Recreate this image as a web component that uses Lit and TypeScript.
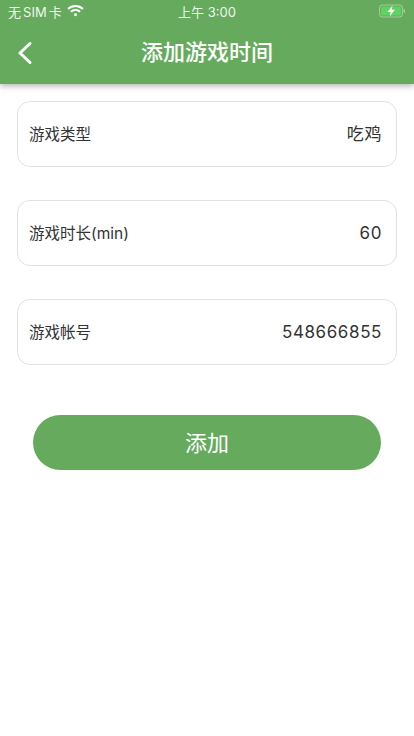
import { LitElement, html, css } from "lit";
import { customElement } from "lit/decorators.js";

const rows = [
  ["游戏类型", "吃鸡", false],
  ["游戏时长(min)", "60", true],
  ["游戏帐号", "548666855", true],
];

@customElement("app-root")
export class AppRoot extends LitElement {
  static styles = css`
    :host {
      display: block;
      width: 414px;
      height: 736px;
      background: #fff;
      overflow: hidden;
      font-family: "Inter", "Noto Sans CJK SC", sans-serif;
    }
    .head {
      background: #66ab5d;
      height: 84px;
      box-shadow: 0 2px 6px rgba(0, 0, 0, 0.3);
      color: #fff;
      display: flex;
      flex-direction: column;
      position: relative;
    }
    .status {
      height: 22px;
      display: grid;
      grid-template-columns: 1fr auto 1fr;
      align-items: center;
      padding: 0 8px;
      font-size: 13px;
      color: rgba(255,255,255,0.92);
    }
    .left { display: flex; align-items: center; gap: 5px; word-spacing: -1.6px; }
    .wifi { margin-top: -2px; }
    .right { display: flex; justify-content: flex-end; }
    .nav {
      flex: 1;
      display: flex;
      align-items: center;
      justify-content: center;
      position: relative;
    }
    .title { font-size: 22px; font-weight: 500; padding-bottom: 6px; }
    .back { position: absolute; left: 17px; top: 19px; }
    .form { display: flex; flex-direction: column; gap: 33px; padding: 17px 17px 0; }
    .row {
      height: 66px;
      box-sizing: border-box;
      border: 1px solid #e2e2e2;
      border-radius: 13px;
      display: flex;
      align-items: center;
      justify-content: space-between;
      padding: 0 14px 2px 11px;
    }
    .label { font-size: 15.5px; color: #333; }
    .value { font-size: 17px; color: #333; letter-spacing: 0.6px; padding-bottom: 2px; }
    .value.num { padding: 2px 0 0; }
    .btn {
      margin: 50px 33px 0;
      height: 55px;
      border-radius: 28px;
      background: #66ab5d;
      color: #fff;
      font-size: 22px;
      padding-bottom: 4px;
      box-sizing: border-box;
      display: flex;
      align-items: center;
      justify-content: center;
    }
  `;

  render() {
    return html`
      <div class="head">
        <div class="status">
          <div class="left">
            <span>无 SIM 卡</span>
            <svg class="wifi" width="17" height="13" viewBox="0 0 16 12" fill="none" stroke="#fff" stroke-width="2">
              <path d="M1 4.5C5 .8 11 .8 15 4.5" />
              <path d="M3.7 7.2c2.5-2.2 6.1-2.2 8.6 0" />
              <circle cx="8" cy="10" r="1.4" fill="#fff" stroke="none" />
            </svg>
          </div>
          <span>上午 3:00</span>
          <div class="right">
            <svg width="27" height="14" viewBox="0 0 27 14">
              <rect x="0.5" y="1" width="23" height="12" rx="3" fill="none" stroke="rgba(255,255,255,0.4)" />
              <rect x="2" y="2.5" width="20" height="9" rx="1.5" fill="#5fd35f" />
              <rect x="24.5" y="5" width="1.5" height="4" rx="0.7" fill="rgba(255,255,255,0.4)" />
              <path d="M13.5 1.5 8.5 8h3.2l-1 4.5 5.2-6.8h-3.2z" fill="#fff" />
            </svg>
          </div>
        </div>
        <div class="nav">
          <svg class="back" width="16" height="24" viewBox="0 0 16 24" fill="none" stroke="#fff" stroke-width="3" stroke-linecap="round" stroke-linejoin="round">
            <path d="M13 2.5 3 12l10 9.5" />
          </svg>
          <span class="title">添加游戏时间</span>
        </div>
      </div>
      <div class="form">
        ${rows.map(
          ([l, v, num]) => html`<div class="row"><span class="label">${l}</span><span class="value ${num ? "num" : ""}">${v}</span></div>`
        )}
      </div>
      <div class="btn">添加</div>
    `;
  }
}
